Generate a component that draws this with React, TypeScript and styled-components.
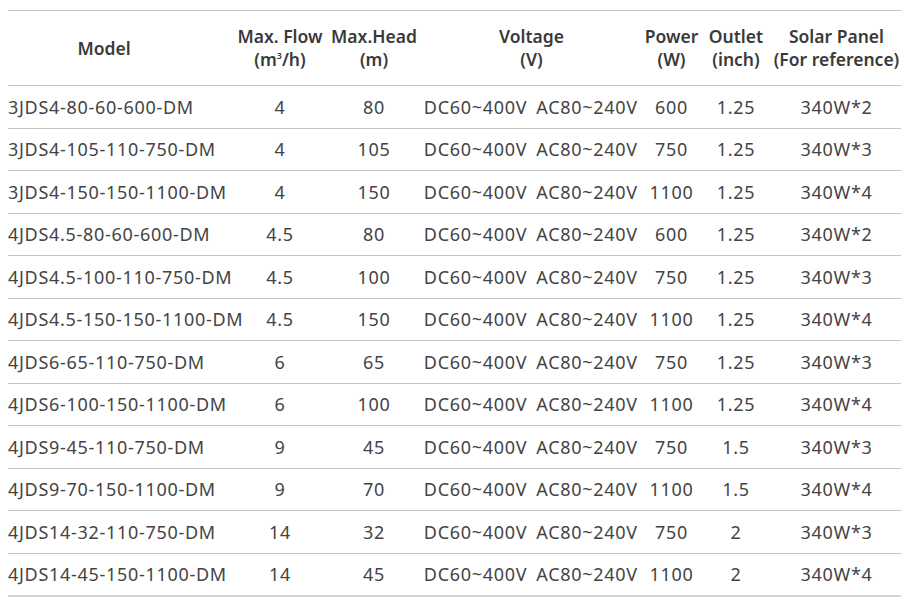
import React from "react";
import styled, { createGlobalStyle } from "styled-components";

const Global = createGlobalStyle`
  html, body { margin: 0; padding: 0; background: #ffffff; }
  body { font-family: "Noto Sans", "Open Sans", sans-serif; }
`;

const COLS = "224px 96px 92px 111px 112px 57px 72px 129px";

const Page = styled.div`
  padding: 10px 1px 0 8px;
  width: 893px;
`;

const Table = styled.div`
  border-top: 1px solid #c4c4c4;
`;

const HeadRow = styled.div`
  display: grid;
  grid-template-columns: ${COLS};
  height: 74px;
  border-bottom: 1px solid #c4c4c4;
`;

const HeadCell = styled.div<{ $span?: number; $pr?: number }>`
  grid-column: span ${(p) => p.$span ?? 1};
  display: flex;
  align-items: center;
  justify-content: center;
  padding-right: ${(p) => p.$pr ?? 0}px;
`;

const HeadText = styled.span`
  display: block;
  text-align: center;
  white-space: nowrap;
  font-family: "Noto Sans", sans-serif;
  font-size: 17.5px;
  line-height: 23px;
  font-weight: 600;
  color: #3a3a3a;
`;

const Row = styled.div<{ $last?: boolean }>`
  display: grid;
  grid-template-columns: ${COLS};
  height: 41.5px;
  align-items: center;
  border-bottom: ${(p) => (p.$last ? "2px solid #d6d6d6" : "1px solid #c4c4c4")};
`;

const Cell = styled.div<{ $left?: boolean }>`
  text-align: ${(p) => (p.$left ? "left" : "center")};
  white-space: nowrap;
  font-family: "Noto Sans", sans-serif;
  font-size: 18px;
  letter-spacing: 0.7px;
  color: #444444;
`;

const Sup = styled.sup`
  font-size: 9px;
  vertical-align: 7px;
  line-height: 0;
`;

type R = [string, string, string, string, string, string];

const rows: R[] = [
  ["3JDS4-80-60-600-DM", "4", "80", "600", "1.25", "340W*2"],
  ["3JDS4-105-110-750-DM", "4", "105", "750", "1.25", "340W*3"],
  ["3JDS4-150-150-1100-DM", "4", "150", "1100", "1.25", "340W*4"],
  ["4JDS4.5-80-60-600-DM", "4.5", "80", "600", "1.25", "340W*2"],
  ["4JDS4.5-100-110-750-DM", "4.5", "100", "750", "1.25", "340W*3"],
  ["4JDS4.5-150-150-1100-DM", "4.5", "150", "1100", "1.25", "340W*4"],
  ["4JDS6-65-110-750-DM", "6", "65", "750", "1.25", "340W*3"],
  ["4JDS6-100-150-1100-DM", "6", "100", "1100", "1.25", "340W*4"],
  ["4JDS9-45-110-750-DM", "9", "45", "750", "1.5", "340W*3"],
  ["4JDS9-70-150-1100-DM", "9", "70", "1100", "1.5", "340W*4"],
  ["4JDS14-32-110-750-DM", "14", "32", "750", "2", "340W*3"],
  ["4JDS14-45-150-1100-DM", "14", "45", "1100", "2", "340W*4"],
];

const heads: { top: React.ReactNode; bottom?: React.ReactNode; span?: number; pr?: number }[] = [
  { top: "Model", pr: 32 },
  { top: "Max. Flow", bottom: <>(m<Sup>3</Sup>/h)</> },
  { top: "Max.Head", bottom: "(m)" },
  { top: "Voltage", bottom: "(V)", span: 2 },
  { top: "Power", bottom: "(W)" },
  { top: "Outlet", bottom: "(inch)" },
  { top: "Solar Panel", bottom: "(For reference)" },
];

export default function App() {
  return (
    <Page>
      <Global />
      <Table>
        <HeadRow>
          {heads.map((h, i) => (
            <HeadCell key={i} $span={h.span} $pr={h.pr}>
              <HeadText>
                {h.top}
                {h.bottom && (
                  <>
                    <br />
                    {h.bottom}
                  </>
                )}
              </HeadText>
            </HeadCell>
          ))}
        </HeadRow>
        {rows.map((r, i) => (
          <Row key={r[0]} $last={i === rows.length - 1}>
            <Cell $left>{r[0]}</Cell>
            <Cell>{r[1]}</Cell>
            <Cell>{r[2]}</Cell>
            <Cell>DC60~400V</Cell>
            <Cell>AC80~240V</Cell>
            <Cell>{r[3]}</Cell>
            <Cell>{r[4]}</Cell>
            <Cell>{r[5]}</Cell>
          </Row>
        ))}
      </Table>
    </Page>
  );
}
